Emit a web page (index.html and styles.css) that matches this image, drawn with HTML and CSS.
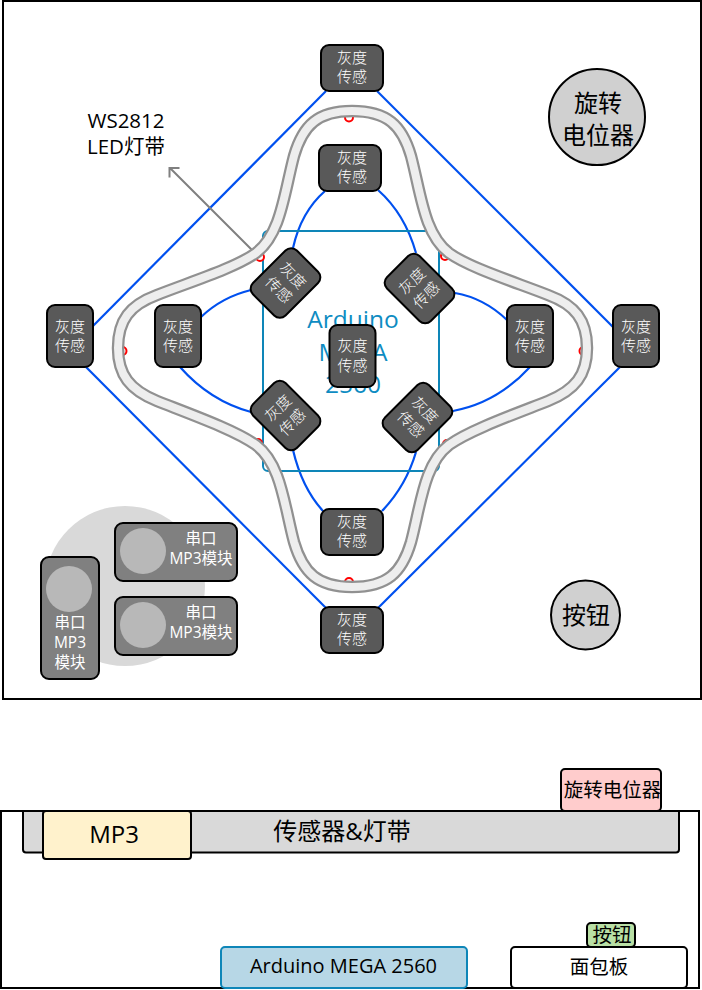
FILE: index.html
```html
<!DOCTYPE html>
<html lang="zh">
<head>
<meta charset="utf-8">
<title>传感器布局图</title>
<link rel="stylesheet" href="styles.css">
</head>
<body>
<svg class="diagram" width="702" height="990" viewBox="0 0 702 990">
  <!-- top view -->
  <rect class="frame" x="3" y="1" width="698" height="698"/>

  <g class="wire">
    <path d="M326 91 L93 326"/>
    <path d="M377 91 L613 327"/>
    <path d="M86 367 L326 608"/>
    <path d="M378 608 L620 367"/>
    <path d="M325 191 Q301 212 293 248"/>
    <path d="M378 190 Q405 214 416 253"/>
    <path d="M201 317 Q222 297 251 290"/>
    <path d="M455 293 Q484 298 507 320"/>
    <path d="M180 367 Q210 401 251 412"/>
    <path d="M530 367 Q497 403 453 411"/>
    <path d="M293 450 Q302 488 323 511"/>
    <path d="M382 511 Q406 486 416 452"/>
  </g>

  <rect class="mega" x="263" y="231" width="176" height="240" rx="5"/>
  <text class="mega-label" text-anchor="middle"><tspan x="353" y="328">Arduino</tspan><tspan x="353" y="360.5">MEGA</tspan><tspan x="353" y="393">2560</tspan></text>

  <g class="reed">
    <circle cx="349" cy="117.500" r="4"/>
    <circle cx="122.500" cy="351" r="4"/>
    <circle cx="583.500" cy="351" r="4"/>
    <circle cx="349" cy="582" r="4"/>
    <circle cx="260" cy="257" r="4"/>
    <circle cx="445" cy="256" r="4"/>
    <circle cx="258" cy="443" r="4"/>
    <circle cx="447" cy="444" r="4"/>
  </g>

  <path class="pointer" d="M253 251 L170 168 M179.500 168 L169.500 168 L169.500 177.500"/>

  <path class="strip-edge" d="M352 111 C318 111 303 125 294 156 C284 194 281 234 256 253 C235 268 190 282 157 295 C130 305 118 320 118 348 C118 375 130 390 157 401 C190 414 235 430 256 445 C281 464 284 504 294 542 C303 573 318 587 352 587 C387 587 402 573 411 542 C421 504 424 464 449 445 C470 430 515 414 548 401 C575 390 587 375 587 348 C587 320 575 305 548 295 C515 282 470 268 449 253 C424 234 421 194 411 156 C402 125 387 111 352 111 Z"/>
  <path class="strip-core" d="M352 111 C318 111 303 125 294 156 C284 194 281 234 256 253 C235 268 190 282 157 295 C130 305 118 320 118 348 C118 375 130 390 157 401 C190 414 235 430 256 445 C281 464 284 504 294 542 C303 573 318 587 352 587 C387 587 402 573 411 542 C421 504 424 464 449 445 C470 430 515 414 548 401 C575 390 587 375 587 348 C587 320 575 305 548 295 C515 282 470 268 449 253 C424 234 421 194 411 156 C402 125 387 111 352 111 Z"/>

  <!-- wide sensors -->
  <g class="sensor" transform="translate(352 68)"><rect x="-31" y="-23" width="62" height="46" rx="8"/><text x="0" y="-5.500">灰度</text><text x="0" y="14">传感</text></g>
  <g class="sensor" transform="translate(350 168)"><rect x="-31" y="-23" width="62" height="46" rx="8"/><text x="2" y="-5.500">灰度</text><text x="2" y="14">传感</text></g>
  <g class="sensor" transform="translate(352 532)"><rect x="-31" y="-23" width="62" height="46" rx="8"/><text x="0" y="-5.500">灰度</text><text x="0" y="14">传感</text></g>
  <g class="sensor" transform="translate(352 630)"><rect x="-31" y="-23" width="62" height="46" rx="8"/><text x="0" y="-5.500">灰度</text><text x="0" y="14">传感</text></g>

  <!-- tall sensors -->
  <g class="sensor" transform="translate(70 336)"><rect x="-23" y="-31" width="46" height="62" rx="8"/><text x="0" y="-4.500">灰度</text><text x="0" y="15">传感</text></g>
  <g class="sensor" transform="translate(178 336)"><rect x="-23" y="-31" width="46" height="62" rx="8"/><text x="0" y="-4.500">灰度</text><text x="0" y="15">传感</text></g>
  <g class="sensor" transform="translate(530 336)"><rect x="-23" y="-31" width="46" height="62" rx="8"/><text x="0" y="-4.500">灰度</text><text x="0" y="15">传感</text></g>
  <g class="sensor" transform="translate(636 336)"><rect x="-23" y="-31" width="46" height="62" rx="8"/><text x="0" y="-4.500">灰度</text><text x="0" y="15">传感</text></g>
  <g class="sensor" transform="translate(352.500 356)"><rect x="-23" y="-31" width="46" height="62" rx="8"/><text x="0" y="-5">灰度</text><text x="0" y="15">传感</text></g>

  <!-- rotated sensors -->
  <g class="sensor" transform="translate(285.500 283) rotate(45)"><rect x="-23" y="-31" width="46" height="62" rx="8"/><text x="0" y="-5">灰度</text><text x="0" y="15">传感</text></g>
  <g class="sensor" transform="translate(419.500 288.500) rotate(-45)"><rect x="-23" y="-31" width="46" height="62" rx="8"/><text x="0" y="-5">灰度</text><text x="0" y="15">传感</text></g>
  <g class="sensor" transform="translate(285.500 415.500) rotate(-45)"><rect x="-23" y="-31" width="46" height="62" rx="8"/><text x="0" y="-5">灰度</text><text x="0" y="15">传感</text></g>
  <g class="sensor" transform="translate(417.500 417.500) rotate(45)"><rect x="-23" y="-31" width="46" height="62" rx="8"/><text x="0" y="-5">灰度</text><text x="0" y="15">传感</text></g>

  <text class="note" text-anchor="middle"><tspan x="126" y="128">WS2812</tspan><tspan x="126" y="154">LED灯带</tspan></text>

  <circle class="knob" cx="597" cy="117" r="48"/>
  <text class="big" text-anchor="middle"><tspan x="598" y="112">旋转</tspan><tspan x="598" y="144">电位器</tspan></text>

  <circle class="knob" cx="585.500" cy="615" r="34.500"/>
  <text class="big" text-anchor="middle" x="586" y="624">按钮</text>

  <!-- MP3 modules -->
  <circle class="speaker-zone" cx="125" cy="586" r="80"/>
  <rect class="module" x="41" y="557" width="58" height="122" rx="8"/>
  <circle class="cone" cx="69" cy="589" r="23"/>
  <text class="module-label"><tspan x="70" y="628">串口</tspan><tspan x="70" y="648">MP3</tspan><tspan x="70" y="668">模块</tspan></text>
  <rect class="module" x="115" y="523" width="122" height="58" rx="8"/>
  <circle class="cone" cx="143" cy="551" r="23"/>
  <text class="module-label"><tspan x="201" y="544">串口</tspan><tspan x="201" y="564">MP3模块</tspan></text>
  <rect class="module" x="115" y="597" width="122" height="58" rx="8"/>
  <circle class="cone" cx="143" cy="625" r="23"/>
  <text class="module-label"><tspan x="201" y="618">串口</tspan><tspan x="201" y="638">MP3模块</tspan></text>

  <!-- side view -->
  <rect class="bar" x="23" y="808" width="656" height="44.500" rx="3"/>
  <rect class="paper" x="0" y="790" width="702" height="20"/>
  <rect class="frame" x="1" y="811" width="698" height="177"/>
  <text class="bar-label" text-anchor="middle" x="342" y="840">传感器&amp;灯带</text>
  <rect class="mp3" x="43" y="811" width="148" height="48" rx="3"/>
  <text class="big" text-anchor="middle" x="114" y="843">MP3</text>
  <rect class="pot" x="561" y="769" width="100" height="42" rx="4"/>
  <text class="pot-label" text-anchor="middle" x="612.500" y="796.500">旋转电位器</text>
  <rect class="button" x="587" y="923" width="48" height="24" rx="4"/>
  <text class="pot-label" text-anchor="middle" x="612" y="942">按钮</text>
  <rect class="board" x="511" y="947" width="176" height="41" rx="4"/>
  <text class="pot-label" text-anchor="middle" x="599" y="974">面包板</text>
  <rect class="mega-side" x="221" y="947" width="246" height="41" rx="4"/>
  <text class="mega-side-label" text-anchor="middle" x="343.500" y="973">Arduino MEGA 2560</text>
</svg>
</body>
</html>
```

FILE: styles.css
```css
html, body {
  margin: 0;
  padding: 0;
  background: #ffffff;
}

.diagram {
  display: block;
}

.diagram text {
  font-family: "Open Sans", "Noto Sans CJK SC", sans-serif;
}

.frame {
  fill: none;
  stroke: #000000;
  stroke-width: 2;
}

.wire path {
  fill: none;
  stroke: #0050ef;
  stroke-width: 2.200;
}

.mega {
  fill: none;
  stroke: #0e86b8;
  stroke-width: 2;
}

.mega-label {
  font-size: 24.500px;
  fill: #0e8cc2;
}

.reed circle {
  fill: #ffffff;
  stroke: #ff0000;
  stroke-width: 2;
}

.pointer {
  fill: none;
  stroke: #808080;
  stroke-width: 2;
}

.strip-edge {
  fill: none;
  stroke: #919191;
  stroke-width: 12.500;
}

.strip-core {
  fill: none;
  stroke: #eeeeee;
  stroke-width: 8;
}

.sensor rect {
  fill: #595959;
  stroke: #000000;
  stroke-width: 2;
}

.sensor text {
  font-size: 15px;
  font-weight: 300;
  fill: #ffffff;
  text-anchor: middle;
}

.note {
  font-size: 20.500px;
  fill: #000000;
}

.big {
  font-size: 24px;
  fill: #000000;
}

.knob {
  fill: #d0d0d0;
  stroke: #000000;
  stroke-width: 2;
}

.speaker-zone {
  fill: #d9d9d9;
}

.module {
  fill: #808080;
  stroke: #000000;
  stroke-width: 2;
}

.cone {
  fill: #b8b8b8;
}

.module-label {
  font-size: 15.500px;
  fill: #ffffff;
  text-anchor: middle;
}

.bar {
  fill: #d9d9d9;
  stroke: #000000;
  stroke-width: 2;
}

.paper {
  fill: #ffffff;
}

.bar-label {
  font-size: 24px;
  fill: #000000;
}

.mp3 {
  fill: #fff2cc;
  stroke: #000000;
  stroke-width: 2;
}

.pot {
  fill: #ffcccc;
  stroke: #000000;
  stroke-width: 2;
}

.pot-label {
  font-size: 19.500px;
  fill: #000000;
}

.button {
  fill: #b9e0a5;
  stroke: #000000;
  stroke-width: 2;
}

.board {
  fill: #ffffff;
  stroke: #000000;
  stroke-width: 2;
}

.mega-side {
  fill: #b7d7e6;
  stroke: #0e86b8;
  stroke-width: 2;
}

.mega-side-label {
  font-size: 20px;
  fill: #000000;
}
```
